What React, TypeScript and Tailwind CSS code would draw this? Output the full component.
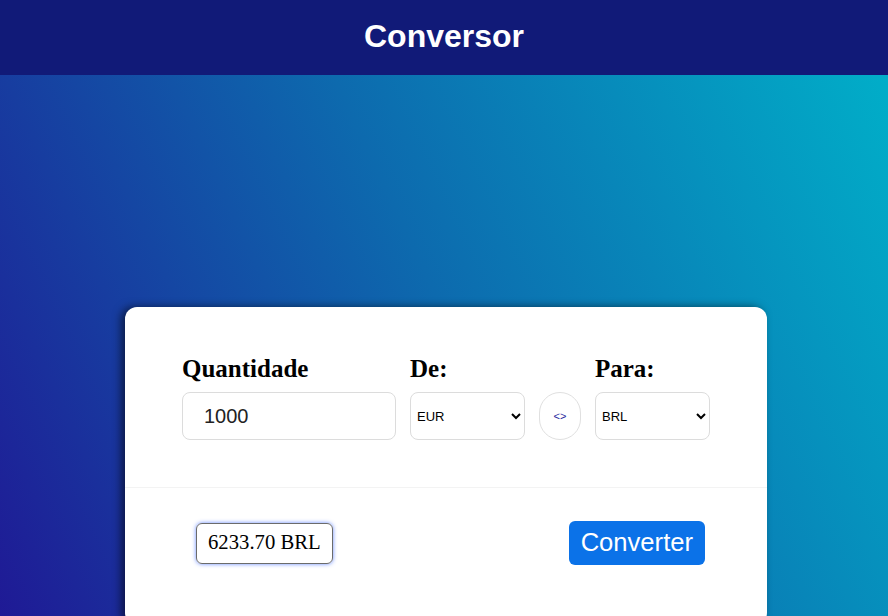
export default function App() {
  return (
    <div className="min-h-screen w-full overflow-hidden bg-[linear-gradient(65deg,#1f1995,#0d6aae_50%,#00b2ca)] font-['Liberation_Sans',Arial,sans-serif]">
      <header className="h-[75px] bg-[#111a78] flex items-center justify-center pb-[4px]">
        <h1 className="text-[32px] font-bold text-white leading-none">Conversor</h1>
      </header>

      <main className="pt-[232px] pl-[4px]">
        <div className="mx-auto w-[642px] bg-white rounded-xl shadow-[-4px_0_8px_rgba(0,0,0,0.55)]">
          <div className="px-[57px] pt-[48px] pb-[47px] border-b border-[#f3f3f3]">
            <div className="flex gap-[14px] items-end">
              <div className="flex flex-col w-[214px]">
                <label className="font-['Liberation_Serif',serif] font-bold text-[25px] leading-[28px] mb-[9px] text-black">
                  Quantidade
                </label>
                <input
                  defaultValue="1000"
                  className="h-[48px] border border-[#dcdcdc] rounded-lg pl-[21px] text-[20px] text-[#222] outline-none"
                />
              </div>
              <div className="flex flex-col w-[116px]">
                <label className="font-['Liberation_Serif',serif] font-bold text-[25px] leading-[28px] mb-[9px] text-black">
                  De:
                </label>
                <select className="h-[48px] border border-[#dcdcdc] rounded-lg bg-white text-[13px] text-black pl-[2px] outline-none">
                  <option>EUR</option>
                </select>
              </div>
              <button className="w-[42px] h-[48px] shrink-0 rounded-full border border-[#e0e0e0] bg-white text-[11px] text-[#2a2a9e] flex items-center justify-center">
                &lt;&gt;
              </button>
              <div className="flex flex-col w-[116px]">
                <label className="font-['Liberation_Serif',serif] font-bold text-[25px] leading-[28px] mb-[9px] text-black">
                  Para:
                </label>
                <select className="h-[48px] border border-[#dcdcdc] rounded-lg bg-white text-[13px] text-black pl-[2px] outline-none">
                  <option>BRL</option>
                </select>
              </div>
            </div>
          </div>

          <div className="flex items-center justify-between pl-[71px] pr-[62px] pt-[33px] pb-[60px]">
            <div className="h-[41px] px-[11px] flex items-center border border-[#6b6b6b] rounded-md shadow-[0_0_4px_rgba(40,90,255,0.7)] font-['Liberation_Serif',serif] text-[20.7px] text-black">
              6233.70 BRL
            </div>
            <button className="h-[44px] px-[12px] rounded-md bg-[#0b72e8] text-white text-[25.6px] leading-none">
              Converter
            </button>
          </div>
        </div>
      </main>
    </div>
  );
}
